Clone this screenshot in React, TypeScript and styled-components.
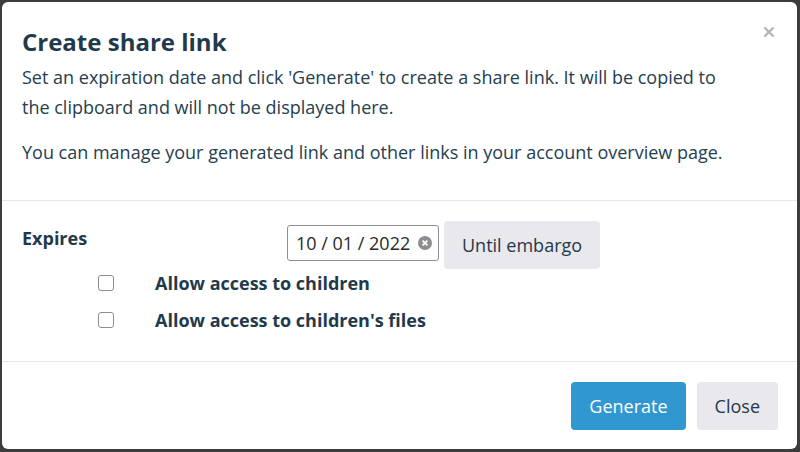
import React, {useState} from 'react';
import styled, {createGlobalStyle} from 'styled-components';

const GlobalStyle = createGlobalStyle`
  html, body {
    margin: 0;
    padding: 0;
    background: #3c3c3c;
  }
  body {
    font-family: 'Open Sans', 'Noto Sans', sans-serif;
    color: #1f3a4b;
  }
`;

const Backdrop = styled.div`
  width: 800px;
  height: 452px;
  padding: 2px 3px 3px 2px;
  box-sizing: border-box;
  background: #3c3c3c;
`;

const Modal = styled.div`
  height: 100%;
  background: #fff;
  border-radius: 6px;
  display: flex;
  flex-direction: column;
  position: relative;
`;

const Header = styled.div`
  padding: 22px 20px 18px 20px;
  border-bottom: 1px solid #e5e5e5;
`;

const Title = styled.h2`
  margin: 0 0 2px;
  font-size: 24px;
  font-weight: 700;
  line-height: 36px;
`;

const Text = styled.p`
  margin: 0 0 15px;
  font-size: 18px;
  line-height: 30px;
  max-width: 710px;
  color: #24404f;
`;

const CloseX = styled.button`
  position: absolute;
  top: 22px;
  right: 20px;
  border: 0;
  background: none;
  padding: 0;
  width: 16px;
  height: 16px;
  cursor: pointer;
  display: flex;
  align-items: center;
  justify-content: center;
`;

const Body = styled.div`
  padding: 20px 20px 23px 20px;
  border-bottom: 1px solid #e5e5e5;
`;

const ExpiresRow = styled.div`
  display: grid;
  grid-template-columns: 260px auto auto 1fr;
  align-items: start;
  column-gap: 5px;
`;

const Label = styled.label`
  font-size: 18px;
  font-weight: 700;
  line-height: 30px;
  padding-top: 2px;
`;

const DateField = styled.div`
  margin-top: 4px;
  width: 152px;
  height: 36px;
  box-sizing: border-box;
  border: 1px solid #8f8f93;
  border-radius: 3px;
  display: flex;
  align-items: center;
  justify-content: space-between;
  padding: 0 6px 0 8px;
  font-size: 18px;
  color: #2a2a2a;
`;

const Button = styled.button<{variant?: 'primary' | 'default'}>`
  font-family: 'Open Sans', 'Noto Sans', sans-serif;
  font-size: 18px;
  height: 48px;
  padding: 0 18px;
  border: 0;
  border-radius: 4px;
  cursor: pointer;
  background: ${(p) => (p.variant === 'primary' ? '#3097d1' : '#e8e8ed')};
  color: ${(p) => (p.variant === 'primary' ? '#fff' : '#1f3a4b')};
`;

const Checks = styled.div`
  margin-top: -5px;
  display: flex;
  flex-direction: column;
`;

const CheckRow = styled.label`
  display: grid;
  grid-template-columns: 57px auto;
  align-items: center;
  padding-left: 76px;
  height: 37px;
  font-size: 18px;
  font-weight: 700;
`;

const Box = styled.span<{checked: boolean}>`
  width: 16px;
  height: 16px;
  border: 1.5px solid #8d8a99;
  border-radius: 3px;
  box-sizing: border-box;
  background: ${(p) => (p.checked ? '#3097d1' : '#fff')};
`;

const Footer = styled.div`
  padding: 20px 19px 19px;
  display: flex;
  justify-content: flex-end;
  gap: 11px;
`;

const Check: React.FC<{label: string}> = ({label}) => {
  const [checked, setChecked] = useState(false);
  return (
    <CheckRow onClick={() => setChecked((c) => !c)}>
      <Box checked={checked} />
      {label}
    </CheckRow>
  );
};

export default function App() {
  return (
    <>
      <GlobalStyle />
      <Backdrop>
        <Modal>
          <CloseX aria-label="Close">
            <svg width="12" height="12" viewBox="0 0 12 12">
              <path
                d="M1.5 1.5L10.5 10.5M10.5 1.5L1.5 10.5"
                stroke="#b5b5b5"
                strokeWidth="2.4"
              />
            </svg>
          </CloseX>
          <Header>
            <Title>Create share link</Title>
            <Text>
              Set an expiration date and click 'Generate' to create a share
              link. It will be copied to the clipboard and will not be
              displayed here.
            </Text>
            <Text>
              You can manage your generated link and other links in your
              account overview page.
            </Text>
          </Header>
          <Body>
            <ExpiresRow>
              <Label>Expires</Label>
              <DateField>
                <span>10 / 01 / 2022</span>
                <svg width="14" height="14" viewBox="0 0 14 14">
                  <circle cx="7" cy="7" r="7" fill="#8a8d91" />
                  <path
                    d="M4.6 4.6L9.4 9.4M9.4 4.6L4.6 9.4"
                    stroke="#fff"
                    strokeWidth="1.8"
                  />
                </svg>
              </DateField>
              <Button>Until embargo</Button>
            </ExpiresRow>
            <Checks>
              <Check label="Allow access to children" />
              <Check label="Allow access to children's files" />
            </Checks>
          </Body>
          <Footer>
            <Button variant="primary">Generate</Button>
            <Button>Close</Button>
          </Footer>
        </Modal>
      </Backdrop>
    </>
  );
}
